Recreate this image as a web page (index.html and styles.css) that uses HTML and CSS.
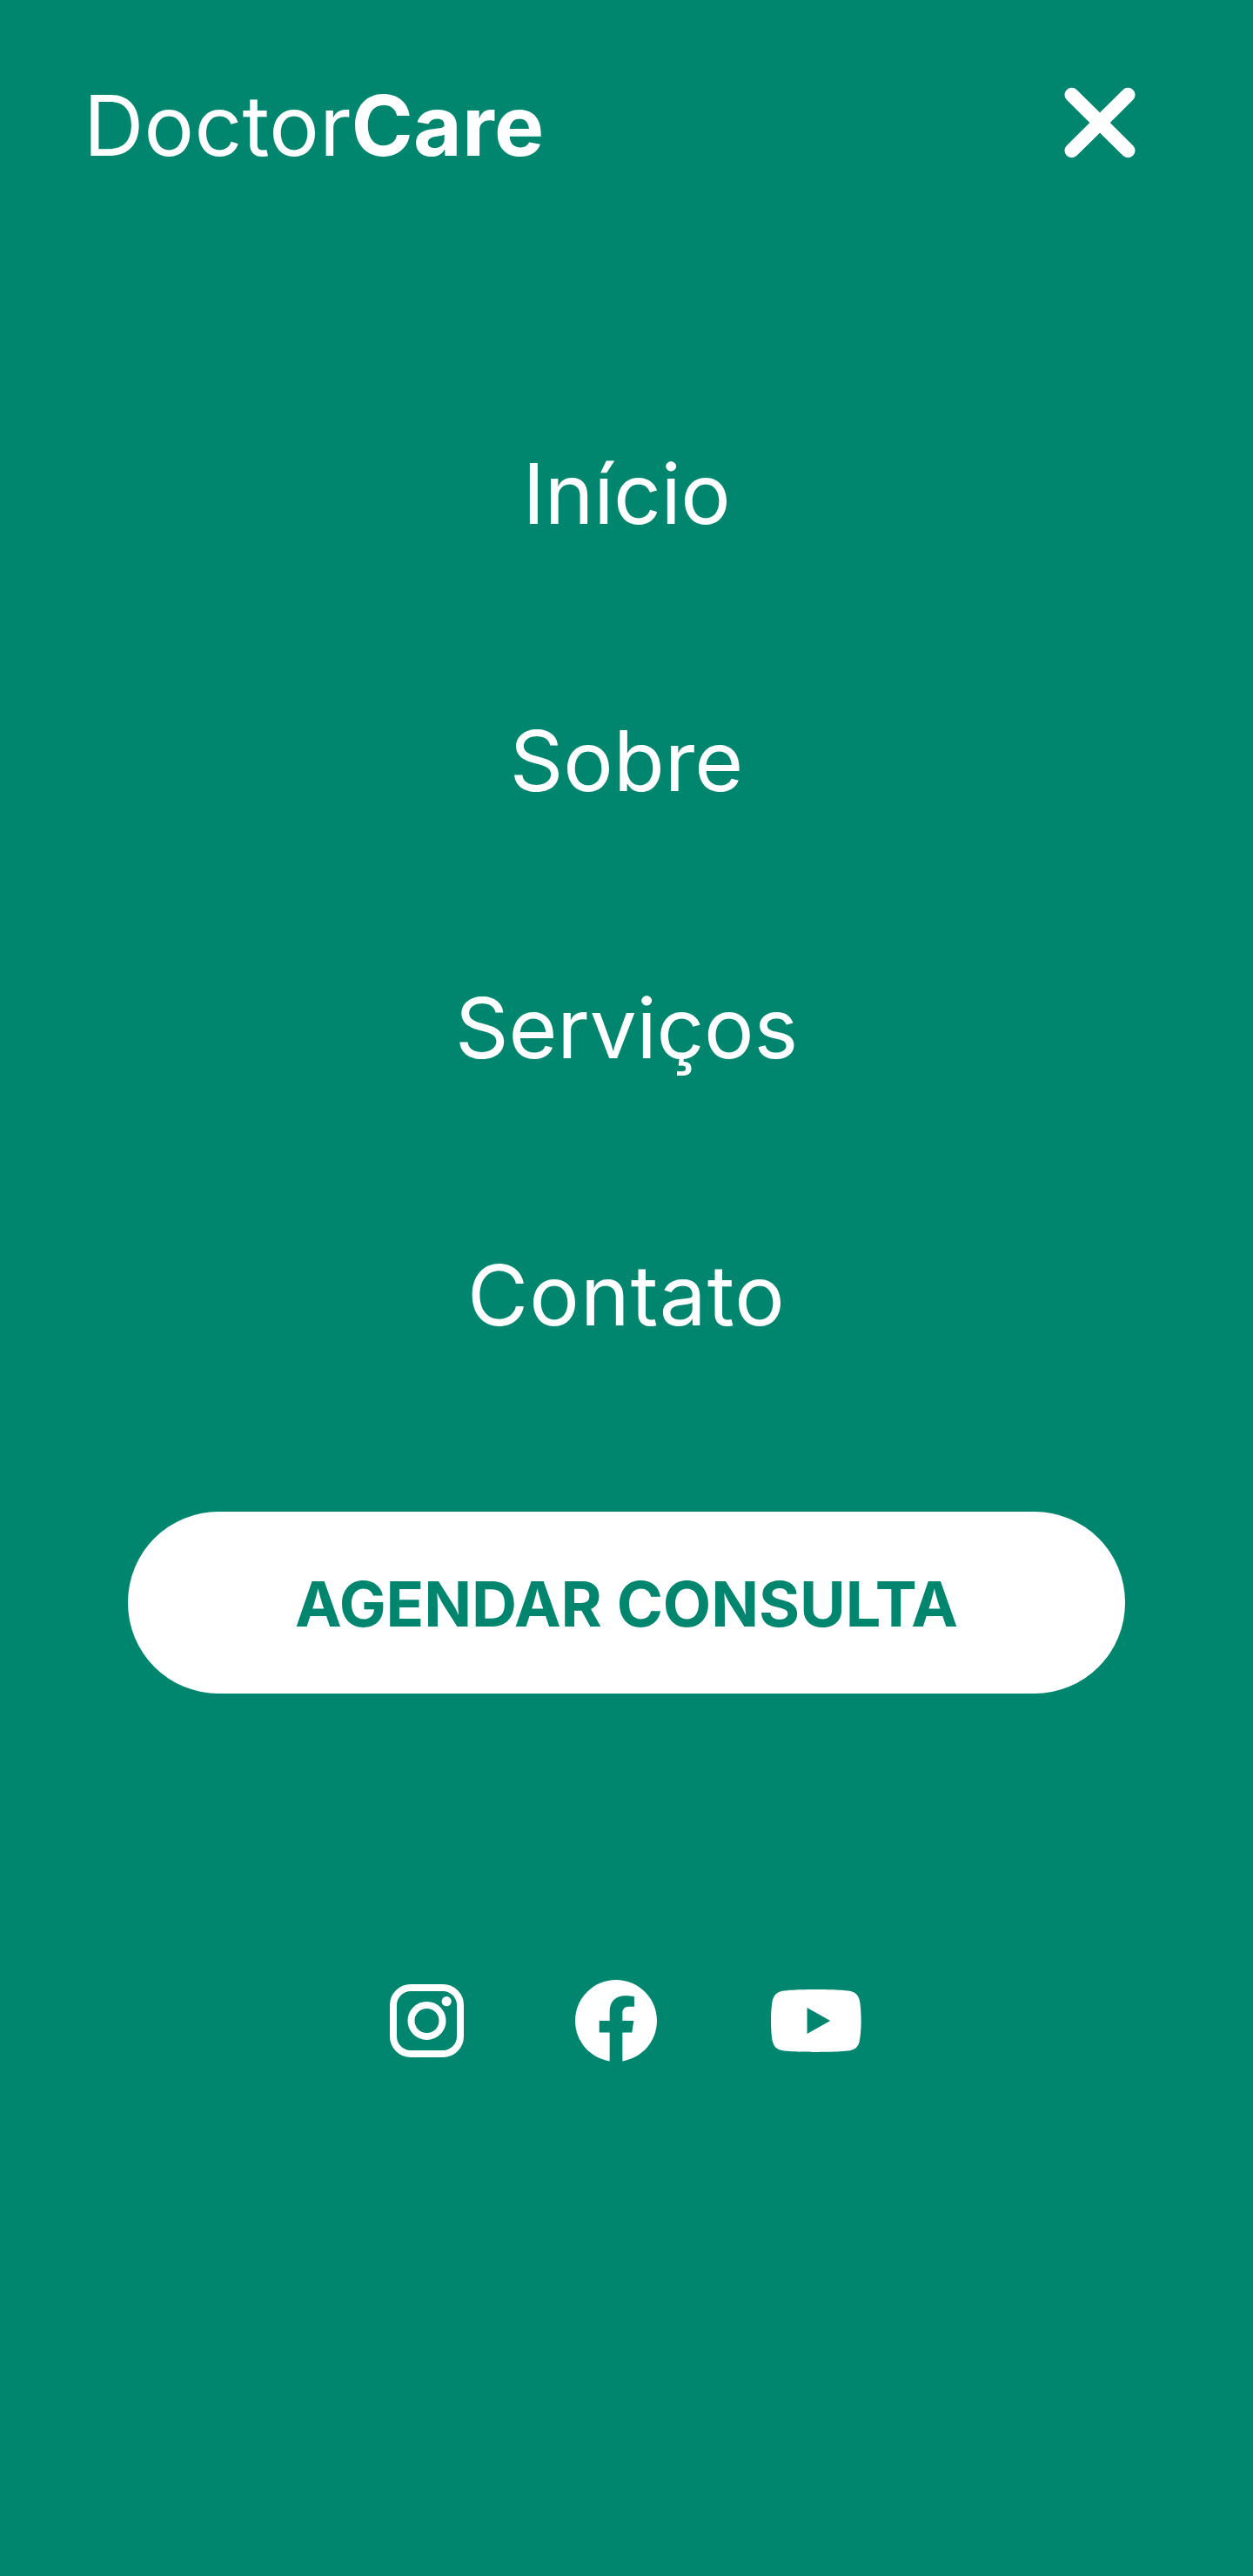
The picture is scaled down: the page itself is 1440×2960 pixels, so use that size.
FILE: index.html
```html
<!DOCTYPE html>
<html lang="pt-BR">
<head>
<meta charset="utf-8">
<title>DoctorCare</title>
<link rel="stylesheet" href="styles.css">
</head>
<body>
<header class="header">
  <a class="logo">Doctor<strong>Care</strong></a>
  <button class="close" aria-label="Fechar menu">
    <svg viewBox="0 0 82 82"><path d="M8.700 9L73.300 73M73.300 9L8.700 73" fill="none" stroke="currentColor" stroke-width="16.500" stroke-linecap="round"/></svg>
  </button>
</header>
<nav class="menu">
  <a class="menu-home">Início</a>
  <a>Sobre</a>
  <a class="menu-services">Serviços</a>
  <a class="menu-contact">Contato</a>
</nav>
<a class="cta">AGENDAR CONSULTA</a>
<div class="social">
  <svg class="instagram" viewBox="0 0 85 84"><rect x="4" y="4" width="77" height="76" rx="20" fill="none" stroke="currentColor" stroke-width="8"/><circle cx="42.500" cy="42" r="18" fill="none" stroke="currentColor" stroke-width="8"/><circle cx="65.200" cy="19.700" r="5.600" fill="currentColor"/></svg>
  <svg class="facebook" viewBox="0 0.073 24 23.854"><path fill="currentColor" d="M24 12.073c0-6.627-5.373-12-12-12s-12 5.373-12 12c0 5.99 4.388 10.954 10.125 11.854v-8.385H7.078v-3.47h3.047V9.43c0-3.007 1.792-4.669 4.533-4.669 1.312 0 2.686.235 2.686.235v2.953H15.83c-1.491 0-1.956.925-1.956 1.874v2.25h3.328l-.532 3.47h-2.796v8.385C19.612 23.027 24 18.062 24 12.073z"/></svg>
  <svg class="youtube" viewBox="0 3.545 24 16.910" preserveAspectRatio="none"><path fill="currentColor" d="M23.498 6.186a3.016 3.016 0 0 0-2.122-2.136C19.505 3.545 12 3.545 12 3.545s-7.505 0-9.377.505A3.017 3.017 0 0 0 .502 6.186C0 8.070 0 12 0 12s0 3.930.502 5.814a3.016 3.016 0 0 0 2.122 2.136c1.871.505 9.376.505 9.376.505s7.505 0 9.377-.505a3.015 3.015 0 0 0 2.122-2.136C24 15.930 24 12 24 12s0-3.930-.502-5.814zM9.620 15.540V8.460L15.780 12z"/></svg>
</div>
</body>
</html>
```
FILE: styles.css
```css
body {
  margin: 0;
  min-height: 2960px;
  background: #00856f;
  color: #fff;
  font-family: Inter, sans-serif;
  display: flex;
  flex-direction: column;
  align-items: center;
}
.header {
  box-sizing: border-box;
  width: 100%;
  height: 288px;
  padding: 0 135px 0 96px;
  display: flex;
  justify-content: space-between;
  align-items: center;
}
.logo { font-size: 96px; line-height: 116px; letter-spacing: 0.3px; }
.close {
  margin-bottom: 6px;
  padding: 0;
  border: 0;
  background: none;
  color: inherit;
}
.close svg { display: block; width: 82px; height: 82px; }
.menu {
  margin-top: 221px;
  display: flex;
  flex-direction: column;
  align-items: center;
  gap: 191px;
  font-size: 96px;
  line-height: 116px;
}
.menu-home { letter-spacing: -0.4px; }
.menu-services { letter-spacing: -0.2px; }
.menu-contact { letter-spacing: 1.1px; }
.cta {
  box-sizing: border-box;
  margin-top: 191.3px;
  padding-top: 2px;
  width: 1145.6px;
  height: 208.4px;
  border-radius: 104.2px;
  display: flex;
  align-items: center;
  justify-content: center;
  background: #fff;
  color: #00856f;
  font-size: 72px;
  font-weight: 700;
  letter-spacing: -0.1px;
}
.social {
  display: flex;
  align-items: center;
  margin-top: 329.5px;
  padding-right: 2.8px;
}
.instagram { width: 85px; height: 84px; margin-right: 128.5px; }
.facebook { width: 94px; height: 93.4px; margin-right: 131px; }
.youtube { width: 103.7px; height: 72px; }
```
